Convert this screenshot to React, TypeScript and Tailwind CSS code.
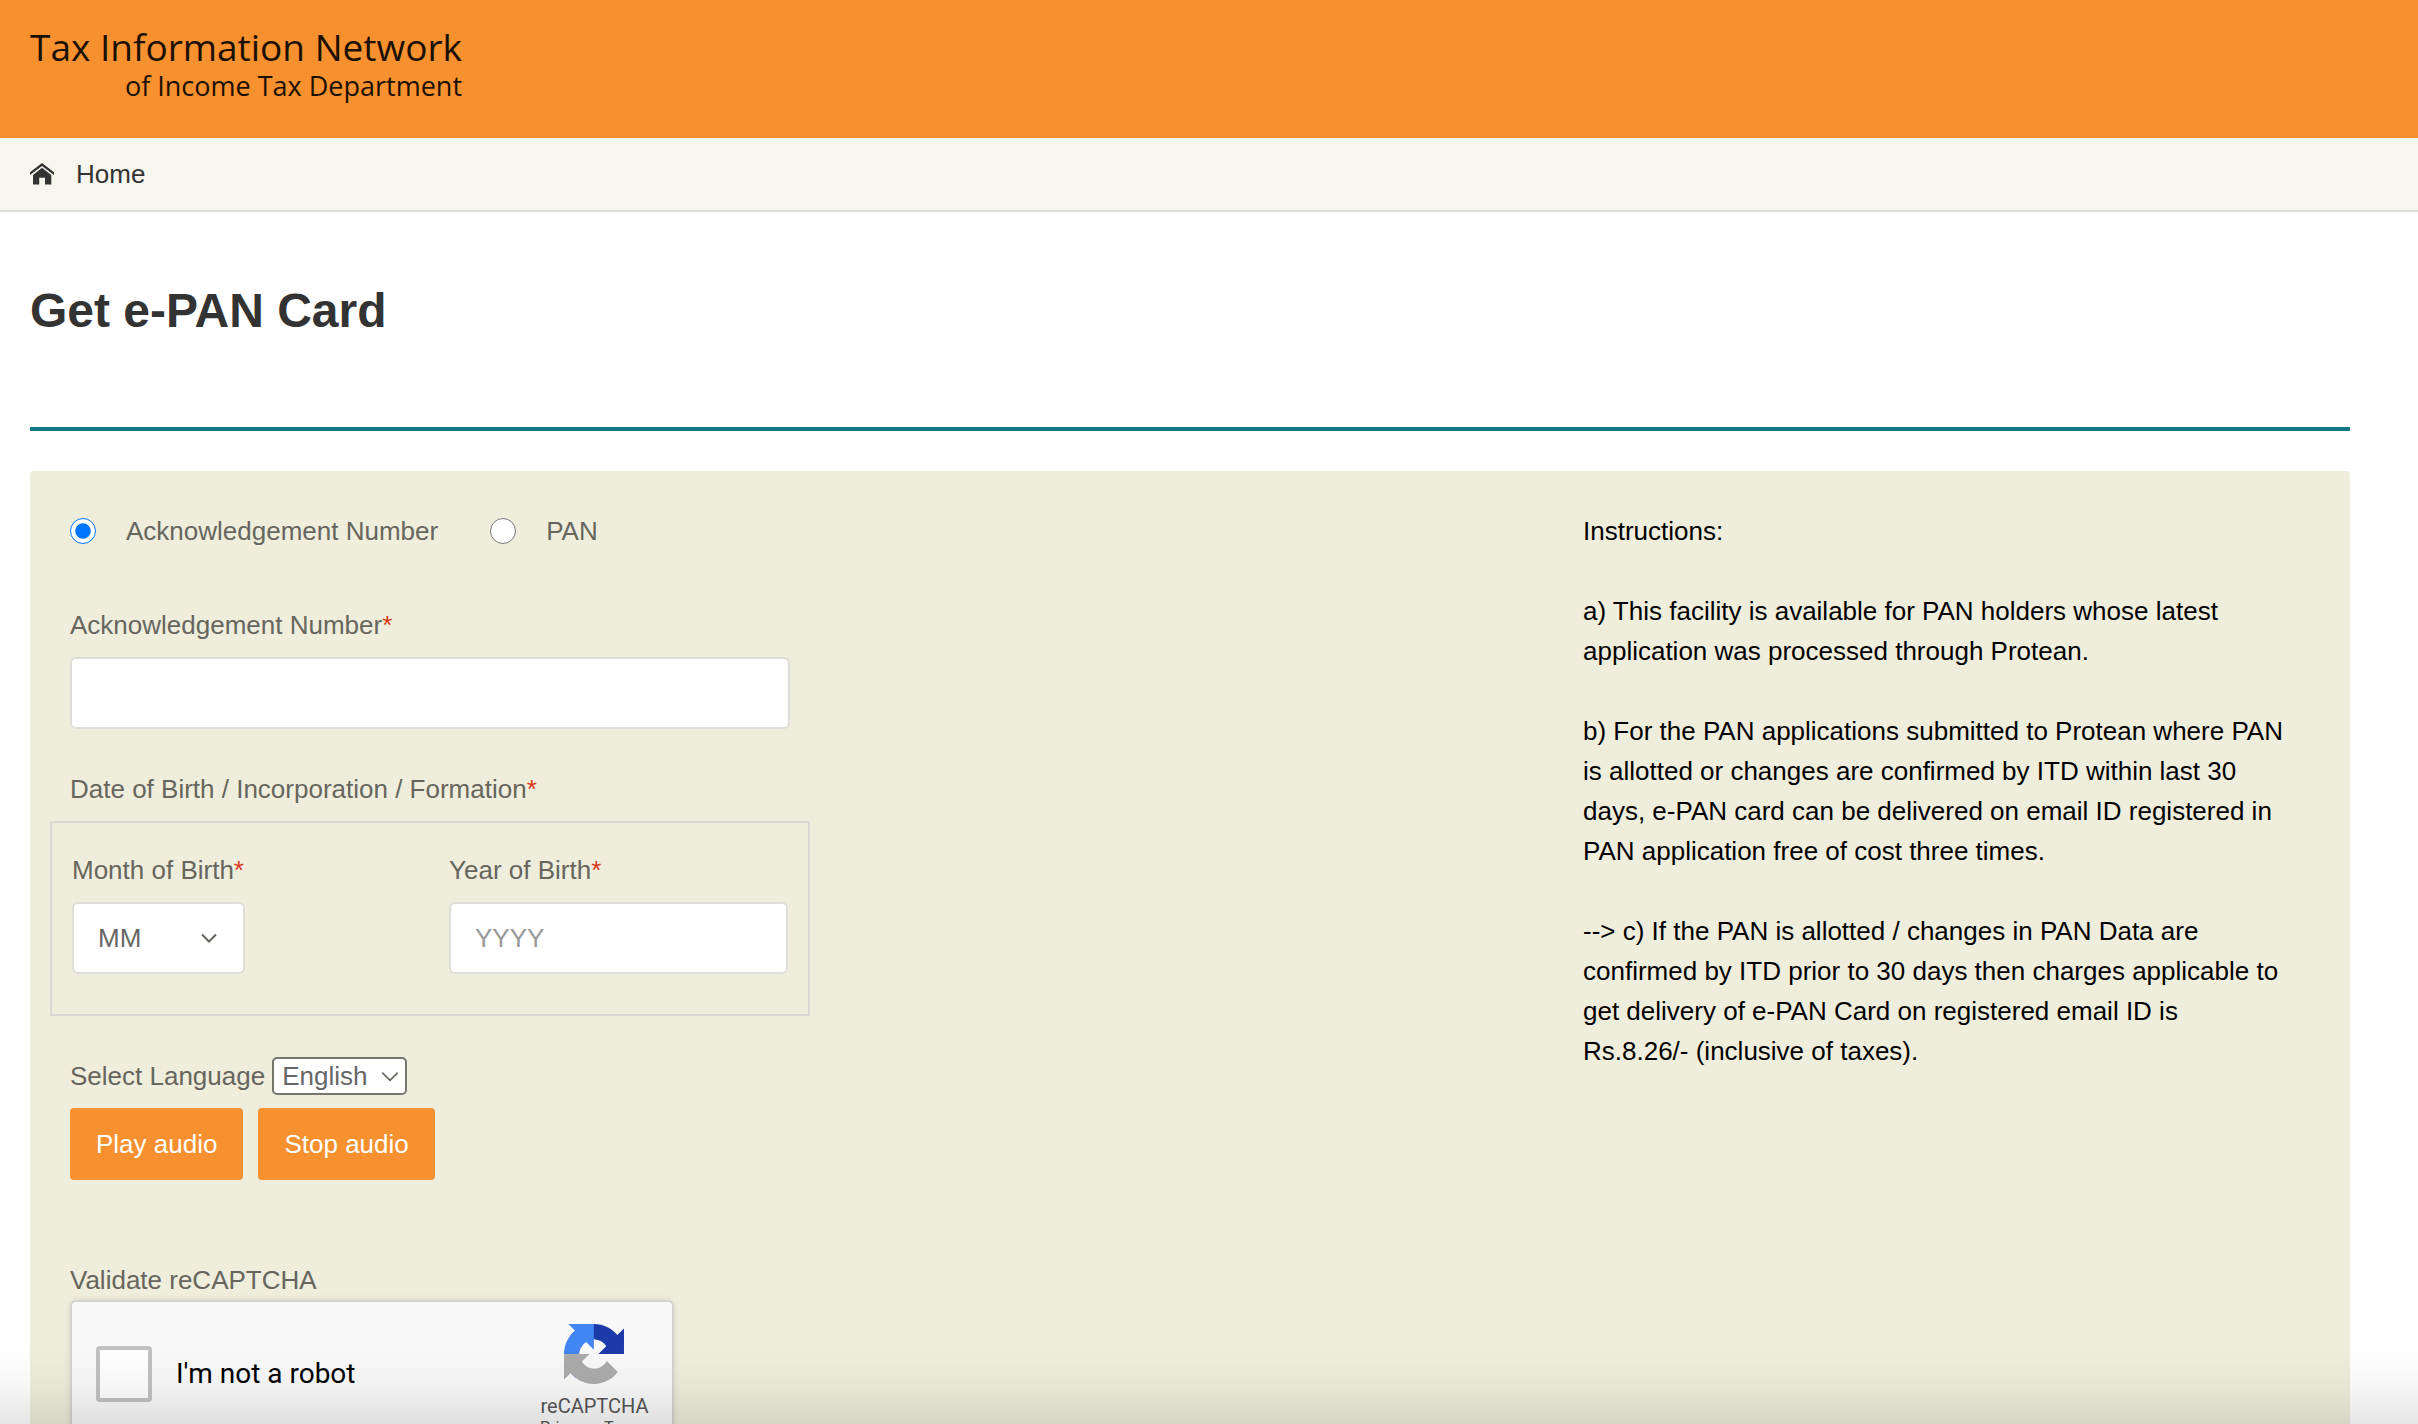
import { useState } from "react";

const MONTHS = ["01", "02", "03", "04", "05", "06", "07", "08", "09", "10", "11", "12"];
const LANGUAGES = ["English", "Hindi"];

const INSTRUCTIONS = [
    "Instructions:",
    "a) This facility is available for PAN holders whose latest application was processed through Protean.",
    "b) For the PAN applications submitted to Protean where PAN is allotted or changes are confirmed by ITD within last 30 days, e-PAN card can be delivered on email ID registered in PAN application free of cost three times.",
    "--> c) If the PAN is allotted / changes in PAN Data are confirmed by ITD prior to 30 days then charges applicable to get delivery of e-PAN Card on registered email ID is Rs.8.26/- (inclusive of taxes).",
];

function HomeIcon() {
    return (
        <svg viewBox="0 0 24 22" className="w-6 h-[22px]" fill="#333" aria-hidden="true">
            <path d="M12 0 24 9.3v2.8L12 3 0 12.1V9.3z" />
            <path d="M12 4.8 21.3 12V21.5H15V14.8H9.2V21.5H3V12z" />
        </svg>
    );
}

function Chevron({ className }: { className: string }) {
    return (
        <svg viewBox="0 0 16 10" className={className} fill="none" stroke="currentColor" aria-hidden="true">
            <path d="M1 1.5 8 8.5l7-7" />
        </svg>
    );
}

function RecaptchaLogo() {
    return (
        <svg viewBox="0 0 64 64" className="w-[60px] h-[60px]" aria-hidden="true">
            <path
                fill="#1c3aa9"
                d="m64 31.955-.033-1.37V4.687l-7.16 7.16C50.948 4.674 42.033.093 32.05.093c-10.4 0-19.622 4.96-25.458 12.64l11.736 11.86a15.55 15.55 0 0 1 4.754-5.334c2.05-1.6 4.952-2.906 8.968-2.906.485 0 .86.057 1.135.163 4.976.393 9.288 3.14 11.828 7.124l-8.307 8.307L64 31.953"
            />
            <path
                fill="#4285f4"
                d="M31.862.094l-1.37.033H4.594l7.16 7.16C4.58 13.147 0 22.06 0 32.046c0 10.4 4.96 19.622 12.64 25.458L24.5 45.768a15.55 15.55 0 0 1-5.334-4.754c-1.6-2.05-2.906-4.952-2.906-8.968 0-.485.057-.86.163-1.135.393-4.976 3.14-9.288 7.124-11.828l8.307 8.307L31.86.095"
            />
            <path
                fill="#ababab"
                d="M.001 32.045l.033 1.37v25.898l7.16-7.16c5.86 7.173 14.774 11.754 24.76 11.754 10.4 0 19.622-4.96 25.458-12.64L45.675 39.407a15.55 15.55 0 0 1-4.754 5.334c-2.05 1.6-4.952 2.906-8.968 2.906-.485 0-.86-.057-1.135-.163-4.976-.393-9.288-3.14-11.828-7.124l8.307-8.307L.001 32.045"
            />
        </svg>
    );
}

function Required() {
    return <span className="text-[#d9371a]">*</span>;
}

export default function App() {
    const [mode, setMode] = useState("ack");
    const [ackNumber, setAckNumber] = useState("");
    const [month, setMonth] = useState("");
    const [year, setYear] = useState("");
    const [language, setLanguage] = useState("English");
    const [human, setHuman] = useState(false);

    return (
        <div className="relative h-screen overflow-hidden bg-white font-['Liberation_Sans',sans-serif] text-[26px] leading-10 text-[#66665e]">
            <header className="bg-[#f7902e] h-[138px] px-[30px] pt-6 flex items-start">
                <div className="text-right font-medium text-[#1c1003] font-['Open_Sans',sans-serif]">
                    <div className="text-[37px] leading-[46px]">Tax Information Network</div>
                    <div className="text-[27px] leading-8">of Income Tax Department</div>
                </div>
            </header>

            <nav className="bg-[#f6f5ee] border-b-2 border-[#dededb] h-[74px] px-[30px] flex items-center">
                <a href="#" className="flex items-center gap-[22px] text-[#333]">
                    <HomeIcon />
                    Home
                </a>
            </nav>

            <main className="ml-[30px] mr-[68px]">
                <h1 className="pt-[69px] pb-[86px] text-[48px] leading-[60px] font-bold text-[#333] border-b-4 border-[#12788a]">
                    Get e-PAN Card
                </h1>

                <div className="mt-10 rounded-t-sm bg-[#efeedc] px-10 pt-10 pb-20 flex justify-between">
                    <form onSubmit={(e) => e.preventDefault()}>
                        <div className="flex items-center gap-[52px]">
                            <label className="flex items-center gap-[30px]">
                                <input
                                    type="radio"
                                    name="mode"
                                    checked={mode === "ack"}
                                    onChange={() => setMode("ack")}
                                    className="size-[26px] accent-[#0075ff]"
                                />
                                Acknowledgement Number
                            </label>
                            <label className="flex items-center gap-[30px]">
                                <input
                                    type="radio"
                                    name="mode"
                                    checked={mode === "pan"}
                                    onChange={() => setMode("pan")}
                                    className="size-[26px] accent-[#0075ff]"
                                />
                                PAN
                            </label>
                        </div>

                        <div className="mt-[54px]">
                            <label htmlFor="ack" className="block">
                                Acknowledgement Number
                                <Required />
                            </label>
                            <input
                                id="ack"
                                type="text"
                                value={ackNumber}
                                onChange={(e) => setAckNumber(e.target.value)}
                                className="block mt-3 w-[720px] h-[72px] px-6 bg-white border-2 border-[#deded9] rounded-md"
                            />
                        </div>

                        {/* Date of birth */}
                        <fieldset className="mt-10">
                            <legend>
                                Date of Birth / Incorporation / Formation
                                <Required />
                            </legend>
                            <div className="mt-3 -ml-5 w-[760px] border-2 border-[#d9d8d3] px-5 pt-[27px] pb-10 grid grid-cols-2 gap-[38px]">
                                <div>
                                    <label htmlFor="month" className="block">
                                        Month of Birth
                                        <Required />
                                    </label>
                                    <div className="relative mt-3 w-[173px]">
                                        <select
                                            id="month"
                                            value={month}
                                            onChange={(e) => setMonth(e.target.value)}
                                            className="block appearance-none w-full h-[72px] px-6 bg-white border-2 border-[#deded9] rounded-md text-[#666]"
                                        >
                                            <option value="">MM</option>
                                            {MONTHS.map((m) => (
                                                <option key={m}>{m}</option>
                                            ))}
                                        </select>
                                        <Chevron className="pointer-events-none absolute right-7 top-[31px] w-4 h-2.5 stroke-2" />
                                    </div>
                                </div>
                                <div>
                                    <label htmlFor="year" className="block">
                                        Year of Birth
                                        <Required />
                                    </label>
                                    <input
                                        id="year"
                                        type="text"
                                        placeholder="YYYY"
                                        value={year}
                                        onChange={(e) => setYear(e.target.value)}
                                        className="block mt-3 w-full h-[72px] px-6 bg-white border-2 border-[#deded9] rounded-md placeholder:text-[#999]"
                                    />
                                </div>
                            </div>
                        </fieldset>

                        <div className="mt-10 flex items-center gap-[7px]">
                            <label htmlFor="language">Select Language</label>
                            <div className="relative">
                                <select
                                    id="language"
                                    value={language}
                                    onChange={(e) => setLanguage(e.target.value)}
                                    className="block appearance-none w-[135px] h-[38px] pl-2 leading-[34px] bg-white border-2 border-[#76766e] rounded-[5px] text-[#666]"
                                >
                                    {LANGUAGES.map((l) => (
                                        <option key={l}>{l}</option>
                                    ))}
                                </select>
                                <Chevron className="pointer-events-none absolute right-2 top-3.5 w-[18px] h-[11px] stroke-[1.5px]" />
                            </div>
                        </div>
                        <div className="mt-3 flex gap-[15px] text-white">
                            <button type="button" className="h-[72px] px-[26px] bg-[#f7902e] rounded">
                                Play audio
                            </button>
                            <button type="button" className="h-[72px] px-[26px] bg-[#f7902e] rounded">
                                Stop audio
                            </button>
                        </div>

                        <div className="mt-20">Validate reCAPTCHA</div>
                        <div className="w-[604px] h-[152px] bg-[#f9f9f9] border-2 border-[#d3d3d0] rounded-md shadow-[0_0_6px_rgba(0,0,0,0.1)] flex items-start justify-between pl-6 pr-[23px] font-[Roboto,sans-serif]">
                            <label className="pt-11 flex items-center gap-6 text-[28px] leading-[56px] text-black">
                                <input
                                    type="checkbox"
                                    checked={human}
                                    onChange={(e) => setHuman(e.target.checked)}
                                    className="appearance-none size-14 bg-white border-4 border-[#c1c1c1] rounded checked:bg-[#4a90e2]"
                                />
                                I'm not a robot
                            </label>
                            <div className="pt-[22px] flex flex-col items-center text-[#555]">
                                <RecaptchaLogo />
                                <div className="mt-2.5 text-[20px] leading-6">reCAPTCHA</div>
                                <div className="flex gap-1 text-[16px] leading-5">
                                    <a href="#">Privacy</a>-<a href="#">Terms</a>
                                </div>
                            </div>
                        </div>
                    </form>

                    <aside className="w-[727px] pr-6 space-y-10 text-black">
                        {INSTRUCTIONS.map((text) => (
                            <p key={text}>{text}</p>
                        ))}
                    </aside>
                </div>
            </main>

            {/* Fade along the bottom edge of the window */}
            <div className="pointer-events-none absolute inset-x-0 bottom-0 h-20 bg-linear-to-b from-transparent via-black/3 to-black/10" />
        </div>
    );
}
